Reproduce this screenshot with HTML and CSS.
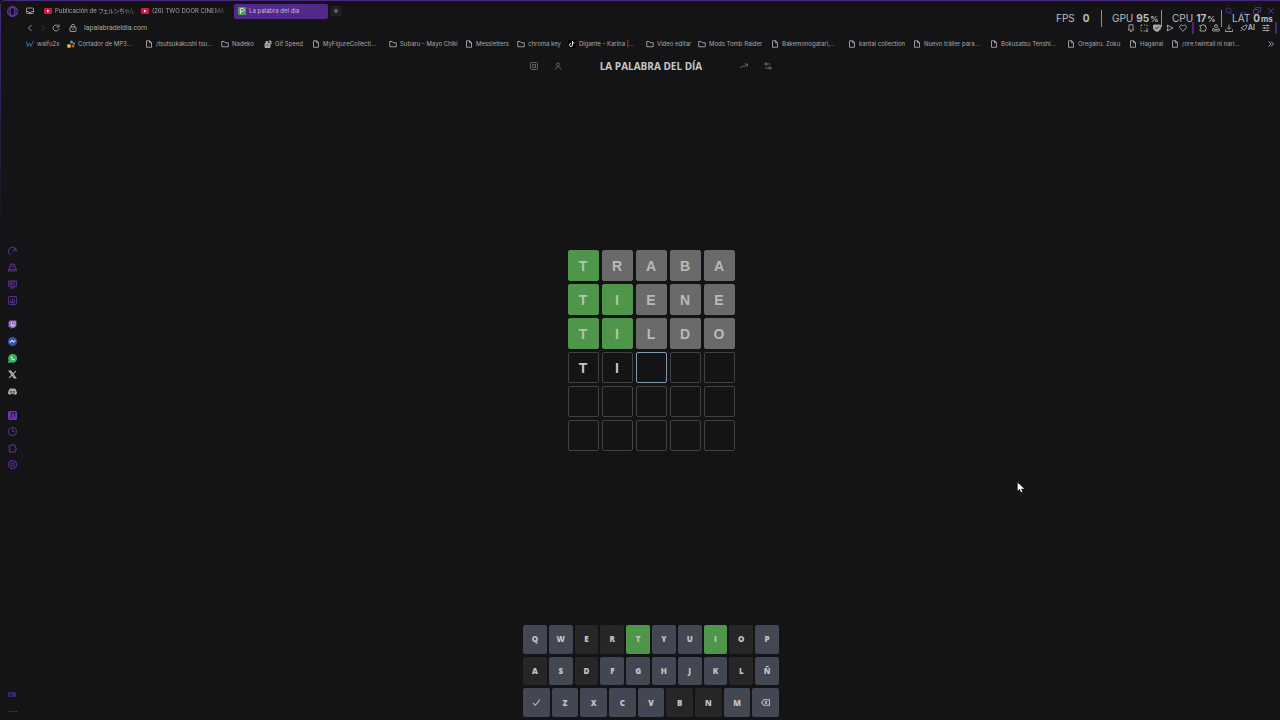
FILE: index.html
```html
<!DOCTYPE html>
<html lang="es">
<head>
  <meta charset="UTF-8">
  <meta name="viewport" content="width=device-width, initial-scale=1.0">
  <title>La palabra del día</title>
  <link rel="stylesheet" href="styles.css">
</head>
<body>
  <!-- Shared icons -->
  <svg class="sprite" aria-hidden="true">
    <symbol id="file" viewBox="0 0 16 16"><path d="M3 1.500h6.500L13 5v9.500H3zM9 1.500V5.500h4"/></symbol>
    <symbol id="folder" viewBox="0 0 16 16"><path d="M1.500 3h5l2 2.500h6v8h-13z"/></symbol>
    <symbol id="youtube" viewBox="0 0 16 16"><rect x="0" y="2" width="16" height="12" rx="2" fill="#d3163f" stroke="none"/><path d="M6 5l5 3-5 3z" fill="#fff" stroke="none"/></symbol>
    <symbol id="puzzle" viewBox="0 0 16 16"><path d="M2 3h4c-.5-3 4.500-3 4 0h3v3.500c3-.5 3 4 0 3.500V14H2v-3.500c3 0 3-4 0-4z"/></symbol>
    <symbol id="person" viewBox="0 0 16 16"><circle cx="8" cy="5" r="3"/><path d="M2.500 15c0-7 11-7 11 0"/></symbol>
  </svg>

  <header class="browser">
    <nav class="tabs">
      <button class="opera" aria-label="Menu"><svg viewBox="0 0 16 16"><circle cx="8" cy="8" r="7"/><ellipse cx="8" cy="8" rx="3.500" ry="6.500"/></svg></button>
      <button class="workspace" aria-label="Workspace"><svg viewBox="0 0 16 16"><rect x="1" y="2" width="14" height="11" rx="2"/><path d="M1 9h4l1 2h4l1-2h4"/></svg></button>
      <a class="tab" href="#"><svg><use href="#youtube"/></svg><span>Publicación de フェルンちゃん</span></a>
      <a class="tab" href="#"><svg><use href="#youtube"/></svg><span>(26) TWO DOOR CINEMA</span></a>
      <a class="tab active" href="#"><svg viewBox="0 0 16 16"><rect width="16" height="16" rx="2" fill="#579862" stroke="none"/><path d="M5 14V3h4c4 0 4 6 0 6H5" stroke="#c9e5cc" stroke-width="2"/></svg><span>La palabra del día</span></a>
      <button class="new-tab" aria-label="New tab"><svg viewBox="0 0 16 16"><path d="M8 2v12M2 8h12"/></svg></button>
      <div class="window-buttons">
        <button aria-label="Search"><svg viewBox="0 0 16 16"><circle cx="7" cy="7" r="5"/><path d="M11 11l4 4"/></svg></button>
        <button aria-label="Minimize"><svg viewBox="0 0 16 16"><path d="M2 12h12"/></svg></button>
        <button aria-label="Restore"><svg viewBox="0 0 16 16"><path d="M1 5h9v9H1zM5 5V1h10v9h-5"/></svg></button>
        <button aria-label="Close"><svg viewBox="0 0 16 16"><path d="M2 2l12 12M14 2L2 14"/></svg></button>
      </div>
    </nav>

    <div class="address-bar">
      <button aria-label="Back"><svg viewBox="0 0 16 16"><path d="M11 2L5 8l6 6"/></svg></button>
      <button class="disabled" aria-label="Forward"><svg viewBox="0 0 16 16"><path d="M5 2l6 6-6 6"/></svg></button>
      <button aria-label="Reload"><svg viewBox="0 0 16 16"><path d="M13 4.500A6 6 0 1 0 14 9M14 1v5H9"/></svg></button>
      <svg class="lock" viewBox="0 0 16 16"><rect x="2" y="6" width="12" height="9" rx="1"/><path d="M5 6V3c0-3 6-3 6 0v3M8 9v3"/></svg>
      <input class="url" type="text" aria-label="Address" value="lapalabradeldia.com">
      <div class="tools">
        <button aria-label="Notifications"><svg viewBox="0 0 16 16"><path d="M4 1.500h8V10l2 2H2l2-2zM6 15h4"/></svg></button>
        <button aria-label="Snapshot"><svg viewBox="0 0 16 16"><path d="M2 5V2h3M8 2h2M13 2h1v3M2 8v2M2 12v2h2M7 14h3M14 8v3M11 14h5M14 11v5"/></svg></button>
        <button aria-label="Ad blocker"><svg viewBox="0 0 16 16"><path d="M1 2h14v6c0 4-4 6-7 7-3-1-7-3-7-7z" fill="#aaa"/><path d="M5 7l2 3 5-5" stroke="#222"/></svg></button>
        <button aria-label="Player"><svg viewBox="0 0 16 16"><path d="M2 2l12 6-12 6 2-6z"/></svg></button>
        <button aria-label="Favourites"><svg viewBox="0 0 16 16"><path d="M8 14.500L2 8C-1 3 5 0 8 4c3-4 9-1 6 4z"/></svg></button>
        <i class="divider"></i>
        <button aria-label="Extensions"><svg><use href="#puzzle"/></svg></button>
        <button aria-label="Profile"><svg viewBox="0 0 16 16"><circle cx="8" cy="4" r="3"/><path d="M5 8L1.500 10v4h13v-4L11 8M4 11h8"/></svg></button>
        <button aria-label="Downloads"><svg viewBox="0 0 16 16"><path d="M8 1v9M4 7l4 4 4-4M1 11v4h14v-4"/></svg></button>
        <button class="ai" aria-label="AI"><svg viewBox="0 0 16 16"><path d="M2 8l7-5 5-1-1 5-5 6-2-3zM3 12l-2 2"/></svg>AI</button>
        <button aria-label="Easy setup"><svg viewBox="0 0 16 16"><path d="M1 3h14M1 8h14M1 13h14M11 1v4M5 6v4M10 11v4"/></svg></button>
        <i class="divider"></i>
      </div>
    </div>

    <nav class="bookmarks">
      <a href="#"><svg viewBox="0 0 16 16"><path d="M1 3l2 10 4-7 2 7 6-11" stroke="#4472b8"/></svg>waifu2x</a>
      <a href="#"><svg viewBox="0 0 16 16"><g stroke="none"><circle cx="4" cy="12" r="4" fill="#d8b64c"/><circle cx="9" cy="4" r="3" fill="#4d9bc9"/><circle cx="12" cy="12" r="3" fill="#c95346"/><circle cx="14" cy="7" r="2" fill="#cf9348"/></g></svg>Cortador de MP3...</a>
      <a href="#"><svg><use href="#file"/></svg>/tsutsukakushi tsu...</a>
      <a href="#"><svg><use href="#folder"/></svg>Nadeko</a>
      <a href="#"><svg viewBox="0 0 16 16"><path d="M2 7h10v8H2zM4 7V3h4v4M10 2h4v7" fill="#aaa"/><path d="M5 10h4" stroke="#222"/></svg>Gif Speed</a>
      <a href="#"><svg><use href="#file"/></svg>MyFigureCollecti...</a>
      <a href="#"><svg><use href="#folder"/></svg>Subaru - Mayo Chiki</a>
      <a href="#"><svg><use href="#file"/></svg>Messletters</a>
      <a href="#"><svg><use href="#folder"/></svg>chroma key</a>
      <a href="#"><svg viewBox="0 0 16 16"><rect width="16" height="16" rx="2" fill="#050505" stroke="none"/><path d="M9 2v8a3 3 0 1 1-3-3M9 3c1 2 2 3 4 3" stroke="#ddd" stroke-width="2"/></svg>Digante - Karina |...</a>
      <a href="#"><svg><use href="#folder"/></svg>Video editar</a>
      <a href="#"><svg><use href="#folder"/></svg>Mods Tomb Raider</a>
      <a href="#"><svg><use href="#file"/></svg>Bakemonogatari,...</a>
      <a href="#"><svg><use href="#file"/></svg>kantai collection</a>
      <a href="#"><svg><use href="#file"/></svg>Nuevo tráiler para...</a>
      <a href="#"><svg><use href="#file"/></svg>Bokusatsu Tenshi...</a>
      <a href="#"><svg><use href="#file"/></svg>Oregairu. Zoku</a>
      <a href="#"><svg><use href="#file"/></svg>Haganai</a>
      <a href="#"><svg><use href="#file"/></svg>/ore twintail ni nari...</a>
      <button aria-label="More bookmarks"><svg viewBox="0 0 16 16"><path d="M3 3l5 5-5 5M8 3l5 5-5 5"/></svg></button>
    </nav>
  </header>

  <div class="content">
    <aside class="sidebar">
      <div class="group">
        <svg viewBox="0 0 16 16"><path d="M5 14A7 7 0 1 1 15 8M8 9l4-5M11 4h2v2"/></svg>
        <svg viewBox="0 0 16 16"><path d="M3 11V5l2-3h6l2 3v6M1 11h14v3H1zM5 6h6"/></svg>
        <svg viewBox="0 0 16 16"><path d="M1 2h14v9H1zM4 5h3v3H4zM9 5h3M9 8h3M4 14h8"/></svg>
        <svg viewBox="0 0 16 16"><rect x="1" y="1" width="14" height="14" rx="2"/><path d="M5 12V7M8 12V4M11 12V6M4 12h8"/></svg>
      </div>
      <div class="group apps">
        <svg viewBox="0 0 16 16"><path d="M3 1h12v9l-4 4H8l-3 2v-3H1V4z" fill="#9271c5" stroke="none"/><path d="M5 3h8v6l-2 2H5z" fill="#c9b9df" stroke="none"/><path d="M8 4v4M11 4v4" stroke="#6e4aa8"/></svg>
        <svg viewBox="0 0 16 16"><circle cx="8" cy="8" r="8" fill="#2f57b0" stroke="none"/><path d="M3 10l4-4 3 3 3-3" stroke="#ddd" stroke-width="2"/></svg>
        <svg viewBox="0 0 16 16"><path d="M0 16l1-5a8 8 0 1 1 4 4z" fill="#39b05c" stroke="none"/><path d="M5 4c-1 4 3 8 7 7l-1-3-2 1-2-2 1-2z" fill="#d4ecd9" stroke="none"/></svg>
        <svg viewBox="0 0 16 16"><path d="M2 2h3l9 12h-3zM14 2L9 7M7 9l-5 5" stroke="#bbb"/></svg>
        <svg viewBox="0 0 16 16"><path d="M3 3l3-1 1 1h2l1-1 3 1c2 3 3 6 3 9l-4 2-1-2H5l-1 2-4-2c0-3 1-6 3-9z" fill="#aaa" stroke="none"/><circle cx="5.500" cy="8.500" r="1.500" fill="#222" stroke="none"/><circle cx="10.500" cy="8.500" r="1.500" fill="#222" stroke="none"/></svg>
      </div>
      <div class="group">
        <svg viewBox="0 0 16 16"><rect width="16" height="16" rx="3" fill="#6c38b0" stroke="none"/><path d="M6 12V4l6-1v8" stroke="#1d1230"/><circle cx="4.500" cy="12" r="1.500" fill="#1d1230"/><circle cx="10.500" cy="11" r="1.500" fill="#1d1230"/></svg>
        <svg viewBox="0 0 16 16"><circle cx="8" cy="8" r="7"/><path d="M8 3v5h4"/></svg>
        <svg><use href="#puzzle"/></svg>
        <svg viewBox="0 0 16 16"><path d="M5 1h6l1 2 3 2v6l-3 2-1 2H5l-1-2-3-2V5l3-2z"/><circle cx="8" cy="8" r="3"/></svg>
      </div>
      <div class="bottom">
        <span>EN</span>
        <svg viewBox="0 0 16 16"><path d="M1 8h3M7 8h3M13 8h3"/></svg>
      </div>
    </aside>

    <main class="game">
      <header class="game-header">
        <div class="game-icons">
          <button aria-label="Ayuda"><svg viewBox="0 0 16 16"><rect x="1" y="1" width="14" height="14" rx="2"/><path d="M5 5h6v6H5zM8 8h1"/></svg></button>
          <button aria-label="Perfil"><svg><use href="#person"/></svg></button>
        </div>
        <h1>LA PALABRA DEL DÍA</h1>
        <div class="game-icons">
          <button aria-label="Estadísticas"><svg viewBox="0 0 16 16"><path d="M0 12l5-4 3 2 6-5M9 4h6v5"/></svg></button>
          <button aria-label="Ajustes"><svg viewBox="0 0 16 16"><path d="M6 4h7M2 2v4h4V2zM2 12h8M10 10h4v4h-4z"/></svg></button>
        </div>
      </header>

      <div class="board">
        <div class="tile correct">T</div><div class="tile absent">R</div><div class="tile absent">A</div><div class="tile absent">B</div><div class="tile absent">A</div>
        <div class="tile correct">T</div><div class="tile correct">I</div><div class="tile absent">E</div><div class="tile absent">N</div><div class="tile absent">E</div>
        <div class="tile correct">T</div><div class="tile correct">I</div><div class="tile absent">L</div><div class="tile absent">D</div><div class="tile absent">O</div>
        <div class="tile">T</div><div class="tile">I</div><div class="tile current"></div><div class="tile"></div><div class="tile"></div>
        <div class="tile"></div><div class="tile"></div><div class="tile"></div><div class="tile"></div><div class="tile"></div>
        <div class="tile"></div><div class="tile"></div><div class="tile"></div><div class="tile"></div><div class="tile"></div>
      </div>

      <div class="keyboard">
        <div class="key-row">
          <button>Q</button><button>W</button><button class="used">E</button><button class="used">R</button><button class="hit">T</button><button>Y</button><button>U</button><button class="hit">I</button><button class="used">O</button><button>P</button>
        </div>
        <div class="key-row">
          <button class="used">A</button><button>S</button><button class="used">D</button><button>F</button><button>G</button><button>H</button><button>J</button><button>K</button><button class="used">L</button><button>Ñ</button>
        </div>
        <div class="key-row">
          <button aria-label="Enviar"><svg viewBox="0 0 16 16"><path d="M2 9l4 4 8-10"/></svg></button><button>Z</button><button>X</button><button>C</button><button>V</button><button class="used">B</button><button class="used">N</button><button>M</button><button aria-label="Borrar"><svg viewBox="0 0 16 16"><path d="M5 3h10v10H5L1 8zM7 6l4 4M11 6l-4 4"/></svg></button>
        </div>
      </div>
    </main>
  </div>

  <!-- Performance overlay -->
  <div class="stats">
    <div>FPS <b>0</b></div>
    <div>GPU <b>95<small>%</small></b></div>
    <div>CPU <b>17<small>%</small></b></div>
    <div>LAT <b>0<small>ms</small></b></div>
  </div>

  <svg class="cursor" viewBox="0 0 12 16"><path d="M1 1v12l3-3 2 5 2-1-2-4h5z" fill="#fff" stroke="none"/></svg>
</body>
</html>
```
FILE: styles.css
```css
* {
  box-sizing: border-box;
}

body {
  margin: 0;
  min-height: 100vh;
  display: flex;
  flex-direction: column;
  position: relative;
  background-color: #141416;
  color: #a8a8aa;
  font-family: Inter, "Noto Sans CJK JP", sans-serif;
  font-size: 7px;
  line-height: 10px;
}

/* purple frame round the window */
body::before {
  content: "";
  position: absolute;
  top: 0;
  left: 0;
  width: 100%;
  height: 240px;
  border-top: 1px solid #48297c;
  border-left: 1px solid #48297c;
  border-radius: 5px 0 0 0;
  -webkit-mask-image: linear-gradient(#000, transparent);
  mask-image: linear-gradient(#000, transparent);
  pointer-events: none;
}

button {
  padding: 0;
  border: none;
  background: none;
  color: inherit;
  font: inherit;
  display: flex;
  align-items: center;
  justify-content: center;
  cursor: pointer;
}

a {
  color: inherit;
  text-decoration: none;
}

svg {
  width: 8px;
  height: 8px;
  flex: none;
  fill: none;
  stroke: currentColor;
  stroke-width: 1.8;
}

.sprite {
  position: absolute;
  width: 0;
  height: 0;
}

/* browser bars */
.browser {
  padding-top: 3px;
}

.tabs,
.address-bar {
  display: flex;
  align-items: center;
}

.tabs {
  height: 16px;
  padding: 0 5px 0 7px;
  font-size: 6px;
}

.opera {
  color: #633aa0;
}

.opera svg {
  width: 11px;
  height: 11px;
}

.workspace {
  margin: 0 6px 0 8px;
}

.tab {
  display: flex;
  align-items: center;
  gap: 3px;
  width: 94px;
  height: 15px;
  margin-right: 3px;
  padding: 0 4px;
  white-space: nowrap;
  font-feature-settings: "palt";
}

.tab.active {
  background-color: #50298a;
  border-radius: 2px;
  color: #c9bcdc;
}

/* inactive titles fade out at the end */
.tab:not(.active) span {
  -webkit-mask-image: linear-gradient(90deg, #000 80%, rgba(0, 0, 0, 0.3));
  mask-image: linear-gradient(90deg, #000 80%, rgba(0, 0, 0, 0.3));
}

.new-tab {
  width: 10px;
  height: 10px;
  background-color: #202022;
}

.new-tab svg {
  width: 6px;
  height: 6px;
}

.window-buttons {
  display: flex;
  gap: 6px;
  margin-left: auto;
  color: #57339a;
}

.address-bar {
  height: 17px;
  padding: 0 3px 0 26px;
}

.address-bar > button {
  margin-right: 5px;
}

.address-bar .disabled {
  color: #3a3a3d;
}

.lock {
  margin: 0 7px 0 4px;
}

.url {
  flex: 1;
  min-width: 0;
  padding: 0;
  border: none;
  outline: none;
  background: none;
  color: inherit;
  font-family: Roboto, sans-serif;
  font-size: 7px;
}

.tools {
  display: flex;
  align-items: center;
  gap: 5px;
}

.divider {
  width: 2px;
  height: 12px;
  background-color: #482779;
}

.ai {
  font-size: 7px;
  font-weight: bold;
  margin: 0 2px;
}

.bookmarks {
  display: grid;
  grid-template-columns: 41px 78px 76px 43px 48px 77px 76px 52px 51px 78px 52px 73px 77px 65px 77px 77px 62px 42px 1fr 10px;
  align-items: center;
  height: 16px;
  padding: 0 4px 0 26px;
  font-size: 6px;
  white-space: nowrap;
}

.bookmarks a {
  display: flex;
  align-items: center;
  gap: 3px;
}

/* sidebar */
.content {
  flex: 1;
  display: flex;
}

.sidebar {
  display: flex;
  flex-direction: column;
  align-items: center;
  gap: 15px;
  width: 22px;
  padding: 195px 0 4px 2px;
  color: #54308a;
}

.sidebar svg {
  width: 9px;
  height: 9px;
}

.group {
  display: flex;
  flex-direction: column;
  justify-content: space-between;
  height: 58px;
}

.group.apps {
  height: 76px;
}

.bottom {
  display: flex;
  flex-direction: column;
  align-items: center;
  gap: 7px;
  margin-top: auto;
  font-size: 6px;
  font-weight: bold;
}

/* game */
.game {
  flex: 1;
  display: flex;
  flex-direction: column;
  align-items: center;
  justify-content: space-between;
  padding: 6px 0 3px;
  font-family: "Open Sans", sans-serif;
  font-weight: 800;
}

.game-header {
  display: flex;
  align-items: center;
  justify-content: space-between;
  width: 242px;
}

h1 {
  margin: 0;
  color: #c8c8ca;
  font-size: 10px;
  font-weight: bold;
  line-height: 16px;
}

.game-icons {
  display: flex;
  gap: 16px;
  color: #6c6c6e;
}

.board {
  display: grid;
  grid-template-columns: repeat(5, 31px);
  grid-auto-rows: 31px;
  gap: 3px;
  margin-top: 76px;
  margin-bottom: 74px;
}

.tile {
  display: flex;
  align-items: center;
  justify-content: center;
  border: 1px solid #414144;
  border-radius: 2px;
  color: #c6c6c8;
  font-family: "Liberation Sans", sans-serif;
  font-weight: bold;
  font-size: 14px;
}

.tile.correct {
  background-color: #4f964a;
  border-color: #4f964a;
  color: #aec8ac;
}

.tile.absent {
  background-color: #6a6a6b;
  border-color: #6a6a6b;
  color: #b9b9b9;
}

.tile.current {
  border-color: #809bb0;
}

.keyboard {
  display: grid;
  gap: 3px;
  width: 256px;
  height: 92px;
}

.key-row {
  display: flex;
  gap: 2px;
}

.key-row button {
  flex: 1;
  border-radius: 2px;
  background-color: #434653;
  color: #c2c3c8;
  font-size: 8px;
}

.key-row svg {
  width: 9px;
  height: 9px;
}

.key-row .used {
  background-color: #262627;
}

.key-row .hit {
  background-color: #4f964a;
}

/* overlay */
.stats {
  position: absolute;
  top: 10px;
  right: 9px;
  display: flex;
  color: #bdbdbf;
  font-size: 10px;
  line-height: 16px;
}

.stats div {
  display: flex;
  gap: 3px;
  width: 60px;
  padding-left: 10px;
  white-space: nowrap;
}

.stats div:first-child {
  gap: 8px;
  width: 55px;
}

.stats div + div {
  border-left: 1px solid #8d8d8f;
}

.stats div:last-child {
  width: 50px;
}

.stats b {
  font-size: 10px;
}

.stats small {
  margin-left: 1px;
  font-size: 8px;
}

.cursor {
  position: absolute;
  top: 482px;
  left: 1017px;
  width: 8px;
  height: 11px;
}
```
